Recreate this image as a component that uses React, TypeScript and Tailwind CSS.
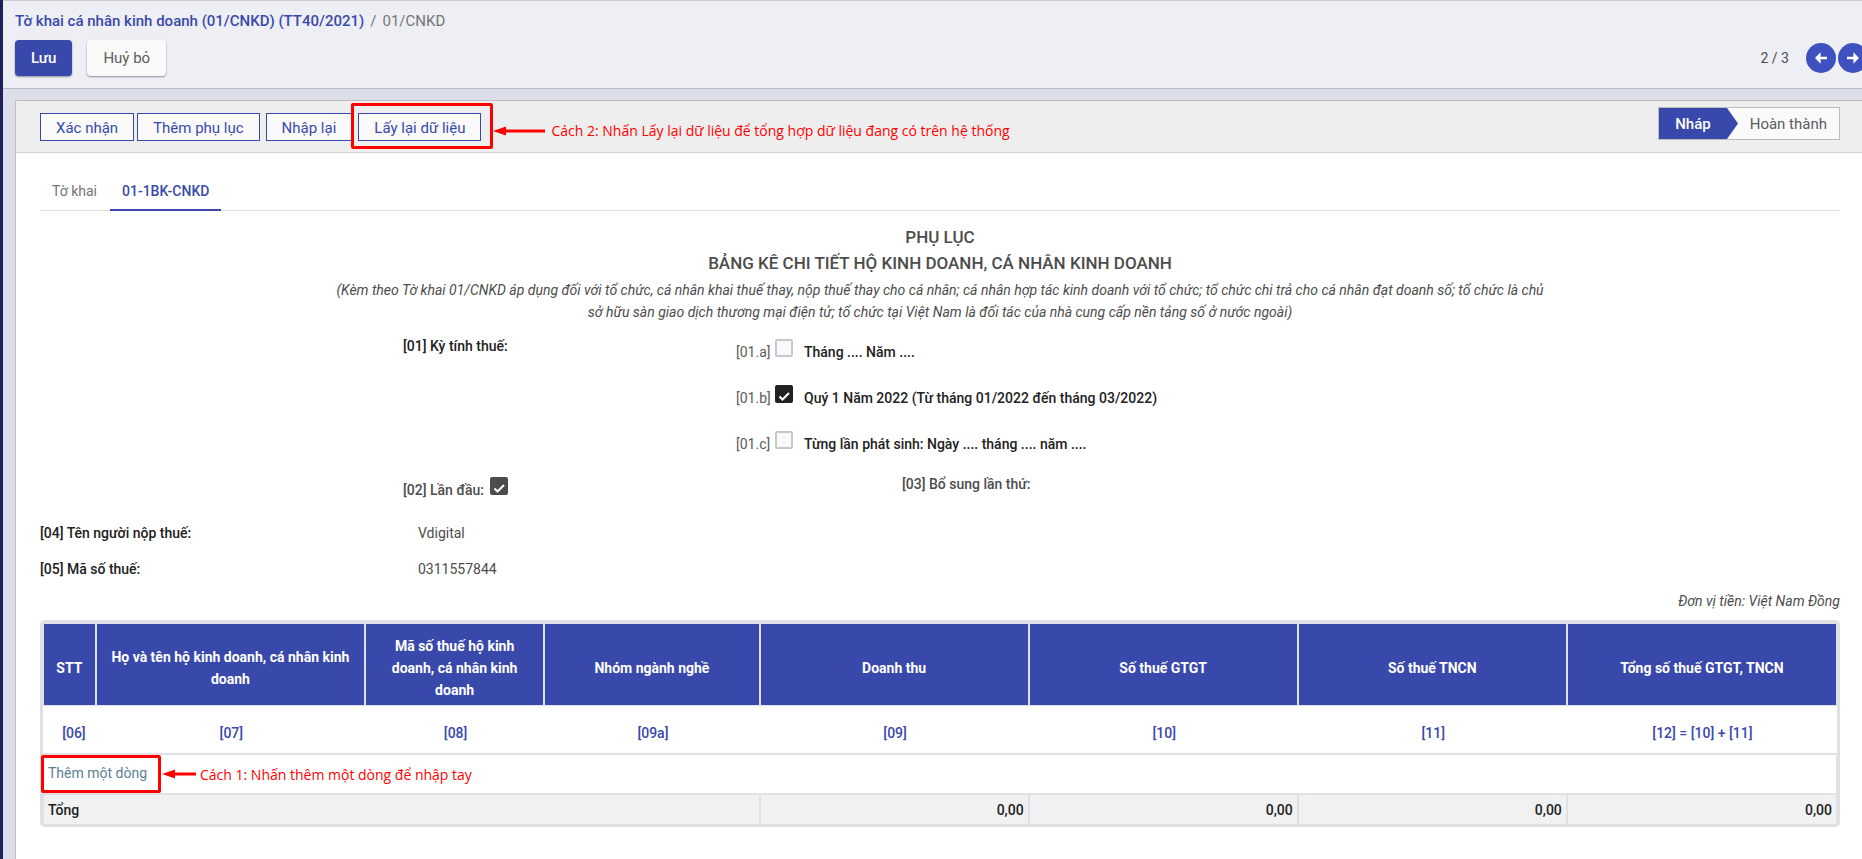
import type { ReactNode } from "react";

function ArrowIcon({ flip = false }: { flip?: boolean }) {
  return (
    <svg viewBox="0 0 12 12" className={flip ? "size-3 rotate-180" : "size-3"} aria-hidden="true">
      <path d="M0 6 L5.6 0.2 V4.7 H12 V7.3 H5.6 V11.8 Z" fill="#fff" />
    </svg>
  );
}

function PagerButton({ label, next = false }: { label: string; next?: boolean }) {
  return (
    <button
      type="button"
      aria-label={label}
      className="flex size-[30px] shrink-0 items-center justify-center rounded-full bg-[#3f51c0]"
    >
      <ArrowIcon flip={next} />
    </button>
  );
}

function ToolbarButton({ children }: { children: ReactNode }) {
  return (
    <button
      type="button"
      className="h-7 border border-[#3949ab] bg-[#fafafa] px-[15px] pt-px text-[15px] leading-[26px] text-[#3949ab]"
    >
      {children}
    </button>
  );
}

function RedArrow({ className }: { className: string }) {
  return (
    <svg viewBox="0 0 52 10" preserveAspectRatio="xMinYMid slice" className={className} aria-hidden="true">
      <path d="M0 5 L13 0.5 V9.5 Z" fill="#f00" />
      <path d="M11 5 H52" stroke="#f00" strokeWidth="3" />
    </svg>
  );
}

function Check({ id, checked = false, dim = false }: { id: string; checked?: boolean; dim?: boolean }) {
  const box = checked
    ? dim
      ? "border-[#4c4c4c] bg-[#4c4c4c]"
      : "border-[#212121] bg-[#212121]"
    : "border-[#c8c8c8] bg-[#fafafa]";
  return (
    <span className="grid size-[18px] shrink-0 place-items-center">
      <input
        id={id}
        type="checkbox"
        defaultChecked={checked}
        className={"col-start-1 row-start-1 size-[18px] appearance-none rounded-xs border-2 " + box}
      />
      {checked && (
        <svg viewBox="0 0 18 18" className="pointer-events-none col-start-1 row-start-1 size-[18px]" aria-hidden="true">
          <path d="M4.5 11.5 L7.5 14.5 L14 8" fill="none" stroke="#fff" strokeWidth="2" />
        </svg>
      )}
    </span>
  );
}

const periods = [
  { id: "p-a", code: "[01.a]", text: "Tháng .... Năm ....", checked: false },
  { id: "p-b", code: "[01.b]", text: "Quý 1 Năm 2022 (Từ tháng 01/2022 đến tháng 03/2022)", checked: true },
  { id: "p-c", code: "[01.c]", text: "Từng lần phát sinh: Ngày .... tháng .... năm ....", checked: false },
];

const columns = [
  { title: "STT", code: "[06]", width: "w-[3%]" },
  { title: "Họ và tên hộ kinh doanh, cá nhân kinh doanh", code: "[07]", width: "w-[15%]" },
  { title: "Mã số thuế hộ kinh doanh, cá nhân kinh doanh", code: "[08]", width: "w-[10%]" },
  { title: "Nhóm ngành nghề", code: "[09a]", width: "w-[12%]" },
  { title: "Doanh thu", code: "[09]", width: "w-[15%]" },
  { title: "Số thuế GTGT", code: "[10]", width: "w-[15%]" },
  { title: "Số thuế TNCN", code: "[11]", width: "w-[15%]" },
  { title: "Tổng số thuế GTGT, TNCN", code: "[12] = [10] + [11]", width: "w-[15%]" },
];

const totals = ["0,00", "0,00", "0,00", "0,00"];

function ControlPanel() {
  return (
    <header className="overflow-hidden border-t border-b border-t-[#cbccd2] border-b-[#bdbdc8] bg-[#eeeff5] pt-2 pb-3 pl-3">
      <nav className="flex h-6 items-center gap-1.5 text-[15px]">
        <a href="#list" className="font-medium text-[#3949ab]">
          Tờ khai cá nhân kinh doanh (01/CNKD) (TT40/2021)
        </a>
        <span className="text-[#6c757d]">/</span>
        <span className="text-[#757575]">01/CNKD</span>
      </nav>
      <div className="mt-[7px] flex items-center justify-between">
        <div className="flex gap-[15px]">
          <button
            type="button"
            className="h-9 rounded bg-[#3949ab] px-4 text-[15px] font-medium text-white shadow-[0_1px_2px_rgba(0,0,0,0.4)]"
          >
            Lưu
          </button>
          <button
            type="button"
            className="h-9 rounded bg-[#fafafa] px-4 text-[15px] text-[#5c5c5c] shadow-[0_1px_2px_rgba(0,0,0,0.4)]"
          >
            Huỷ bỏ
          </button>
        </div>
        <div className="-mr-1.5 flex items-center gap-0.5">
          <span className="mr-[15px] text-sm text-[#4c4c4c]">2 / 3</span>
          <PagerButton label="Trước" />
          <PagerButton label="Sau" next />
        </div>
      </div>
    </header>
  );
}

function Toolbar() {
  return (
    <div className="flex h-[52px] items-start justify-between border-b border-[#cfd2d8] bg-[#eee] pt-1.5 pr-[22px] pl-6">
      <div className="flex gap-[3px] pt-1.5">
        <ToolbarButton>Xác nhận</ToolbarButton>
        <ToolbarButton>Thêm phụ lục</ToolbarButton>
        <span />
        <ToolbarButton>Nhập lại</ToolbarButton>
        <span />
        <div className="relative">
          <ToolbarButton>Lấy lại dữ liệu</ToolbarButton>
          <div className="pointer-events-none absolute -top-2.5 -right-3 -bottom-2 -left-[7px] rounded-xs border-3 border-[#f00]" />
          <div className="absolute top-2 left-full ml-3 flex items-center gap-1.5">
            <RedArrow className="h-2.5 w-[52px]" />
            <span className="font-['Open_Sans',sans-serif] text-sm whitespace-nowrap text-[#f00]">
              Cách 2: Nhấn Lấy lại dữ liệu để tổng hợp dữ liệu đang có trên hệ thống
            </span>
          </div>
        </div>
      </div>
      <div className="flex h-[33px] items-stretch border border-[#bdbdbd] bg-[#fafafa] text-[15px]">
        <div className="flex items-center bg-[#3949ab] pl-4 pr-4 font-medium text-white">Nháp</div>
        <svg viewBox="0 0 11 31" className="h-full w-[11px]" preserveAspectRatio="none" aria-hidden="true">
          <path d="M0 0 L11 15.5 L0 31 Z" fill="#3949ab" />
        </svg>
        <div className="flex items-center px-3 text-[#5c5c5c]">Hoàn thành</div>
      </div>
    </div>
  );
}

function DetailTable() {
  return (
    <div className="rounded-[5px] border-3 border-[#dee0e3]">
      <table className="w-full table-fixed border-separate border-spacing-0">
        <thead>
          <tr>
            {columns.map((c) => (
              <th
                key={c.code}
                className={
                  "h-[83px] border-t border-r-2 border-b border-[#dee2e6] bg-[#3949ab] px-3 pt-1.5 align-middle font-bold text-white first:border-l last:border-r " +
                  c.width
                }
              >
                {c.title}
              </th>
            ))}
          </tr>
          <tr>
            {columns.map((c) => (
              <th key={c.code} className="h-[49px] border-b-2 border-[#dee2e6] pt-1.5 align-middle font-medium text-[#3949ab] first:pl-2">
                {c.code}
              </th>
            ))}
          </tr>
        </thead>
        <tbody>
          <tr>
            <td colSpan={8} className="h-10 border-x border-b-2 border-[#dee2e6] p-0">
              <div className="relative flex h-[38px] items-center">
                <a href="#add" className="pb-0.5 pl-1 text-[#5c7e95]">
                  Thêm một dòng
                </a>
                <div className="pointer-events-none absolute inset-y-0 -left-[3px] w-[120px] rounded-xs border-3 border-[#f00]" />
                <div className="absolute inset-y-0 left-[118px] flex items-center gap-1">
                  <RedArrow className="h-2.5 w-[34px]" />
                  <span className="pt-0.5 font-['Open_Sans',sans-serif] text-sm whitespace-nowrap text-[#f00]">
                    Cách 1: Nhấn thêm một dòng để nhập tay
                  </span>
                </div>
              </div>
            </td>
          </tr>
        </tbody>
        <tfoot>
          <tr className="bg-[#f1f1f1] font-medium text-[#212121]">
            <td colSpan={4} className="h-[29px] border-r-2 border-l border-[#dee2e6] px-1">
              Tổng
            </td>
            {totals.map((t, i) => (
              <td key={i} className="border-r-2 border-[#dee2e6] px-1 text-right last:border-r">
                {t}
              </td>
            ))}
          </tr>
        </tfoot>
      </table>
    </div>
  );
}

function Sheet() {
  return (
    <section className="flex-1 pt-[18px] pr-[22px] pl-6">
      <div className="flex border-b border-[#ddd]">
        <a href="#main" className="pt-[9px] pr-[13px] pb-[7px] pl-3 text-[#757575]">
          Tờ khai
        </a>
        <a href="#annex" className="-mb-px border-b-2 border-[#3949ab] px-3 pt-[9px] pb-[7px] font-medium text-[#3949ab]">
          01-1BK-CNKD
        </a>
      </div>

      <div className="mx-auto mt-[13px] max-w-[1224px] text-center">
        <h1 className="text-[17px] leading-[26px] font-medium">PHỤ LỤC</h1>
        <h2 className="text-[17px] leading-[26px] font-medium">BẢNG KÊ CHI TIẾT HỘ KINH DOANH, CÁ NHÂN KINH DOANH</h2>
        <p className="mt-[3px] italic">
          (Kèm theo Tờ khai 01/CNKD áp dụng đối với tổ chức, cá nhân khai thuế thay, nộp thuế thay cho cá nhân; cá nhân hợp
          tác kinh doanh với tổ chức; tổ chức chi trả cho cá nhân đạt doanh số; tổ chức là chủ sở hữu sàn giao dịch thương
          mại điện tử; tổ chức tại Việt Nam là đối tác của nhà cung cấp nền tảng số ở nước ngoài)
        </p>
      </div>

      <div className="mt-3 grid grid-cols-[363fr_333fr_1104fr]">
        <span className="col-start-2 font-medium text-[#212121]">[01] Kỳ tính thuế:</span>
        <div className="flex flex-col gap-[22px] pt-1">
          {periods.map((p) => (
            <label key={p.id} htmlFor={p.id} className="flex items-start">
              <span className="w-[39px] pt-0.5 text-[#5c5c5c]">{p.code}</span>
              <Check id={p.id} checked={p.checked} />
              <span className="pt-0.5 pl-[11px] font-medium text-[#212121]">{p.text}</span>
            </label>
          ))}
        </div>
      </div>

      <div className="mt-[18px] grid grid-cols-[363fr_499fr_938fr] font-medium">
        <label htmlFor="first" className="col-start-2 flex items-start gap-1.5 pt-1">
          <span className="pt-0.5">[02] Lần đầu:</span>
          <Check id="first" checked dim />
        </label>
        <span>[03] Bổ sung lần thứ:</span>
      </div>

      <dl className="mt-[21px] grid grid-cols-[378fr_1422fr] gap-y-3.5">
        <dt className="font-medium text-[#212121]">[04] Tên người nộp thuế:</dt>
        <dd>Vdigital</dd>
        <dt className="font-medium text-[#212121]">[05] Mã số thuế:</dt>
        <dd>0311557844</dd>
      </dl>

      <p className="mt-2.5 mb-2 text-right italic">Đơn vị tiền: Việt Nam Đồng</p>
      <DetailTable />
    </section>
  );
}

export default function App() {
  return (
    <div className="flex min-h-screen flex-col overflow-hidden border-l-3 border-[#1d2159] bg-[#dcdeea] font-[Roboto,sans-serif] text-sm leading-[22px] text-[#4c4c4c]">
      <ControlPanel />
      <main className="mt-[11px] ml-3 flex flex-1 flex-col rounded-tl-xs border-t border-l border-[#bdbdc2] bg-white">
        <Toolbar />
        <Sheet />
      </main>
    </div>
  );
}
